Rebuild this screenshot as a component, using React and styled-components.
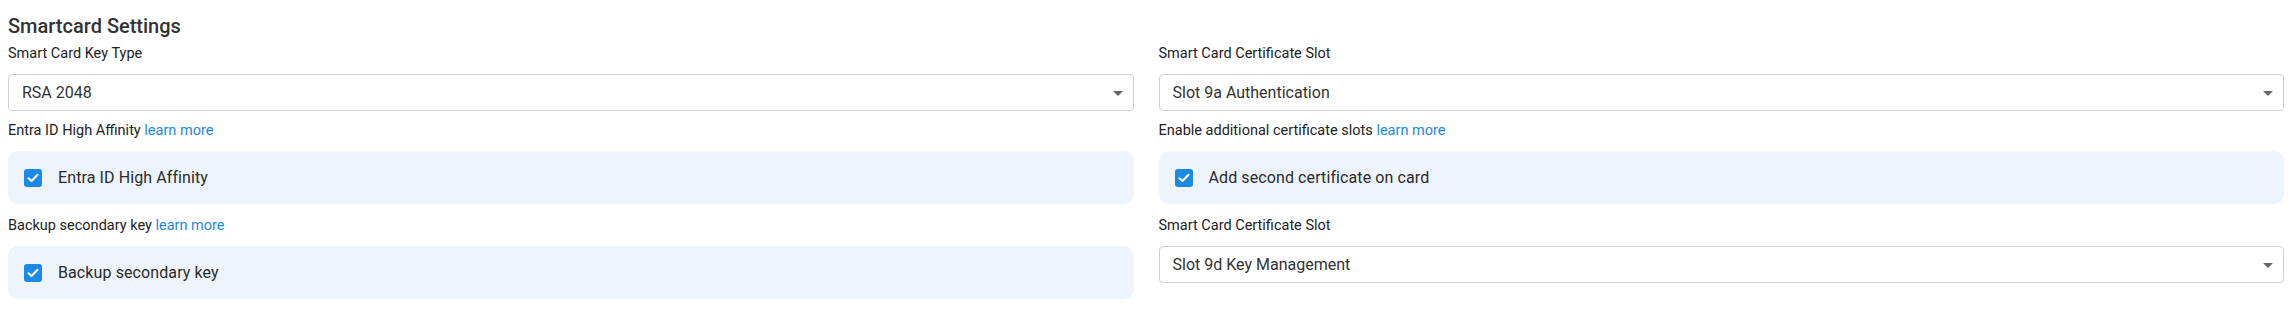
import React from 'react';
import styled, { createGlobalStyle } from 'styled-components';

const GlobalStyle = createGlobalStyle`
    body {
        margin: 0;
        background: #ffffff;
        font-family: Roboto, "Liberation Sans", Arial, sans-serif;
        color: #222;
    }
`;

const StyledPage = styled.div`
    padding: 12px 8px 0;
`;

const StyledTitle = styled.h2`
    margin: 0 0 4px;
    font-size: 20px;
    line-height: 28px;
    font-weight: 500;
    color: #333;
`;

const StyledGrid = styled.div`
    display: grid;
    grid-template-columns: 1fr 1fr;
    column-gap: 25px;
    align-items: start;
`;

const StyledField = styled.div`
    display: flex;
    flex-direction: column;
    margin-bottom: ${props => (props.$card ? '12px' : '10px')};
`;

const StyledLabel = styled.label`
    display: block;
    margin-bottom: 10px;
    font-size: 14.5px;
    line-height: 20px;
    color: #222;

    & > a {
        color: #1e88e5;
        text-decoration: none;
    }
`;

const StyledSelect = styled.div`
    position: relative;
    display: flex;
    align-items: center;
    box-sizing: border-box;
    height: 37px;
    padding: 0 36px 0 13px;
    border: 1px solid #cdd1d5;
    border-radius: 4px;
    background: #fff;
    font-size: 16px;
    color: #333;
`;

const StyledCaret = styled.span`
    position: absolute;
    right: 10px;
    top: 50%;
    width: 0;
    height: 0;
    margin-top: -2px;
    border-left: 5px solid transparent;
    border-right: 5px solid transparent;
    border-top: 5px solid #666;
`;

const StyledCard = styled.div`
    display: flex;
    align-items: center;
    gap: 16px;
    box-sizing: border-box;
    height: 53px;
    padding: 0 16px;
    border-radius: 10px;
    background: #edf4fc;
    font-size: 16px;
    letter-spacing: 0.1px;
    color: #2b2b2b;
`;

const StyledBox = styled.span`
    display: inline-flex;
    align-items: center;
    justify-content: center;
    width: 18px;
    height: 18px;
    border-radius: 3px;
    background: #1a8ae5;
`;

const Select = ({ label, value }) => (
    <StyledField>
        <StyledLabel>{label}</StyledLabel>
        <StyledSelect>
            {value}
            <StyledCaret />
        </StyledSelect>
    </StyledField>
);

const CheckCard = ({ label, text }) => (
    <StyledField $card>
        <StyledLabel>
            {label} <a href="#">learn more</a>
        </StyledLabel>
        <StyledCard>
            <StyledBox>
                <svg width="12" height="10" viewBox="0 0 12 10">
                    <path d="M1.5 5.2 L4.5 8 L10.5 1.8" fill="none" stroke="#fff" strokeWidth="2" strokeLinecap="round" strokeLinejoin="round" />
                </svg>
            </StyledBox>
            {text}
        </StyledCard>
    </StyledField>
);

const App = () => {
    return <React.Fragment>
        <GlobalStyle />
        <StyledPage>
            <StyledTitle>Smartcard Settings</StyledTitle>
            <StyledGrid>
                <Select label="Smart Card Key Type" value="RSA 2048" />
                <Select label="Smart Card Certificate Slot" value="Slot 9a Authentication" />

                <CheckCard label="Entra ID High Affinity" text="Entra ID High Affinity" />
                <CheckCard label="Enable additional certificate slots" text="Add second certificate on card" />

                <CheckCard label="Backup secondary key" text="Backup secondary key" />
                <Select label="Smart Card Certificate Slot" value="Slot 9d Key Management" />
            </StyledGrid>
        </StyledPage>
    </React.Fragment>
}

export default App;
